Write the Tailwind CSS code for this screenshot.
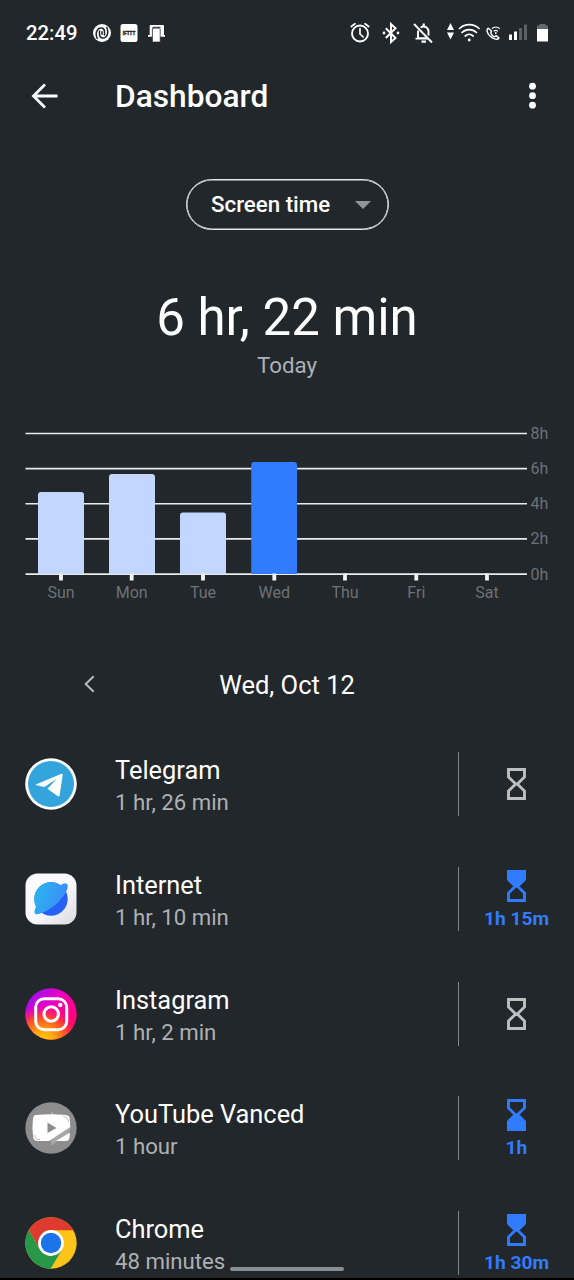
<!DOCTYPE html>
<html lang="en">
<head>
<meta charset="utf-8">
<title>Dashboard</title>
<script src="https://cdn.jsdelivr.net/npm/@tailwindcss/browser@4"></script>
</head>
<body class="bg-[#22272b] font-['Roboto',sans-serif] text-white">
<div class="relative h-[1280px] w-[574px] overflow-hidden">
  <svg class="hidden">
    <defs>
      <symbol id="hg-frame" viewBox="0 0 19 32"><path d="M1.5 1.5H17.5V9L10.300 16L17.5 23V30.5H1.5V23L8.700 16L1.5 9Z" fill="none" stroke="currentColor" stroke-width="2.9"/></symbol>
      <symbol id="hg-top" viewBox="0 0 19 32"><use href="#hg-frame"/><path d="M0 0H19V10L13 16H6L0 10Z" fill="currentColor"/></symbol>
      <symbol id="hg-bottom" viewBox="0 0 19 32"><use href="#hg-frame"/><path d="M0 32H19V22L13 16H6L0 22Z" fill="currentColor"/></symbol>
    </defs>
  </svg>

  <!-- Status bar -->
  <header class="flex h-16 items-center justify-between pl-[26px] pr-[26px] pt-px">
    <div class="flex items-center">
      <span class="w-[67px] pt-px text-[20.300px] font-medium leading-6">22:49</span>
      <svg class="h-[18px] w-[64px] text-white" viewBox="0 0 64 18" overflow="visible">
        <circle cx="9" cy="9" r="9" fill="#fff"/>
        <g fill="none" stroke="#22272b" stroke-width="1.500" stroke-linecap="round">
          <path d="M4.200 14.500C2.800 11 3 8 4.500 5.800C6.500 2.800 11.500 3.500 11.500 7.500V11"/>
          <path d="M13.800 3.500C15.200 7 15 10 13.500 12.200C11.500 15.200 6.500 14.500 6.500 10.500V7"/>
          <path d="M9 7.800V10.200"/>
        </g>
        <rect x="27.500" y="0" width="17" height="18" rx="2.500" fill="#fff"/>
        <text x="29.800" y="10.700" font-size="4.500" font-weight="900" fill="#22272b" stroke="#22272b" stroke-width=".3" textLength="12.500" lengthAdjust="spacingAndGlyphs">IFTTT</text>
        <path d="M56.700 2Q56.700 1 57.700 1H70Q71 1 71 2V11H72V12.700H55V11H56.700Z" fill="#fff"/>
        <path d="M60 12.700V3.300H67.500" fill="none" stroke="#22272b" stroke-width="1"/>
        <rect x="59.400" y="4.200" width="7.800" height="13.800" rx=".6" fill="#fff" stroke="#22272b" stroke-width=".7"/>
      </svg>
    </div>
    <svg class="h-6 w-[200px]" viewBox="348 20 200 24" fill="none" stroke="#fff">
      <g stroke-width="1.900" stroke-linecap="round">
        <circle cx="360" cy="32.500" r="8"/><path d="M360 27.500V33L363.200 36M351.300 25.500L355 22.800M368.700 25.500L365 22.800" stroke-width="1.700"/>
      </g>
      <path d="M385.800 27.200L395.500 37L391 41V23L395.500 27.200L385.800 37" stroke-width="2"/>
      <g fill="#fff" stroke="none"><circle cx="384" cy="32" r="1.400"/><circle cx="398" cy="32" r="1.400"/></g>
      <path d="M414 23L432 41.500" stroke-width="1.900"/>
      <path d="M418 29.500V37.300H428M420.600 26.500C424.500 24 428.500 26.800 428.500 30.500V34.500M415.500 37.600H428.500" stroke-width="1.900"/>
      <path d="M423.700 25V22.500M421.500 40.700H426" stroke-width="2.200"/>
      <path d="M447 29L450.500 22L454 29ZM447 31.500H454L450.500 38.500Z" fill="#fff" stroke="none"/>
      <g stroke-width="1.700" stroke-linecap="round"><path d="M459.500 27.500a14 14 0 0 1 19.500 0M462 31.500a10.500 10.500 0 0 1 14.500 0M465.200 35a6 6 0 0 1 8 0"/></g>
      <circle cx="469.200" cy="39" r="1.400" fill="#fff" stroke="none"/>
      <path d="M488.300 27.200C485.800 28.500 487.500 32.700 489.700 34.800C492 37.200 497 40 499 37L496.200 34.600L494.200 35.800C492.500 35 491.300 33.500 490.800 32L491.500 30Z" stroke-width="1.400" stroke-linejoin="round"/>
      <path d="M491.800 27.600a6 6 0 0 1 8 0M493.700 30.200a3.500 3.500 0 0 1 4.200 0" stroke-width="1.200"/><circle cx="495.800" cy="32" r=".9" fill="#fff" stroke="none"/>
      <g stroke="none"><path d="M509 33.500h3v5.500h-3zM514 30.500h3v8.500h-3z" fill="#fff"/><path d="M519 27h3v12h-3zM524 23.500h3v15.500h-3z" fill="#5d6164"/><path d="M537 28V24.500h2.500V23h6v1.500H548V28z" fill="#66696c"/><path d="M537 28h11v12.500H537z" fill="#fff"/></g>
    </svg>
  </header>

  <!-- Toolbar -->
  <div class="flex h-16 items-center pl-[31px] pr-[28px]">
    <svg class="h-[26px] w-[27px]" viewBox="0 0 27 26" fill="none" stroke="#fff" stroke-width="2.800"><path d="M14 1.500L2.500 13L14 24.500M2.500 13H26.500"/></svg>
    <h1 class="ml-[57px] flex-1 pt-[2px] text-[31.700px] font-medium leading-[38px]">Dashboard</h1>
    <svg class="h-[28px] w-[27px]" viewBox="0 0 27 28" fill="#fff"><circle cx="13.500" cy="4.200" r="3.400"/><circle cx="13.500" cy="13.700" r="3.400"/><circle cx="13.500" cy="23.200" r="3.400"/></svg>
  </div>

  <!-- Metric selector and total -->
  <button class="mx-auto mt-[50.500px] flex h-[51px] w-[203px] items-center justify-between rounded-full border border-[#e4e6e8] pl-[24.500px] pr-[17px] text-[22.300px] font-medium shadow-[inset_0_0_0_0.600px_#e4e6e8]">
    <span class="pt-[2px]">Screen time</span>
    <svg class="mt-0.5 h-2 w-4" viewBox="0 0 16 8" fill="#92969b"><path d="M0 0H16L8 8Z"/></svg>
  </button>
  <div class="mt-[58.500px] text-center text-[51px] leading-[60px]">6 hr, 22 min</div>
  <div class="mt-[4px] text-center text-[22.300px] leading-[26px] text-[#aeb0b3]">Today</div>

  <!-- Weekly chart -->
  <svg class="mt-[42px] block h-[190px] w-[574px]" viewBox="0 420 574 190" font-size="16" fill="#6d7174">
    <g stroke="#e9ebec" stroke-width="1.600"><path d="M25.500 433.500H527M25.500 468.600H527M25.500 503.700H527M25.500 538.900H527M25.500 574.100H527"/></g>
    <g fill="#c2d6ff">
      <path d="M38 574V495q0-3 3-3H81q3 0 3 3V574Z"/>
      <path d="M109 574V477q0-3 3-3H152q3 0 3 3V574Z"/>
      <path d="M180 574V515.500q0-3 3-3H223q3 0 3 3V574Z"/>
      <path d="M251.200 574V465q0-3 3-3H294q3 0 3 3V574Z" fill="#317bff"/>
    </g>
    <path d="M61 573.500V580.500M131.700 573.500V580.500M203 573.500V580.500M274.300 573.500V580.500M345 573.500V580.500M416.300 573.500V580.500M487 573.500V580.500" stroke="#f1f3f4" stroke-width="3.800"/>
    <g text-anchor="middle">
      <text x="61" y="598">Sun</text><text x="131.700" y="598">Mon</text><text x="203" y="598">Tue</text><text x="274.300" y="598">Wed</text><text x="345" y="598">Thu</text><text x="416.300" y="598">Fri</text><text x="487" y="598">Sat</text>
    </g>
    <text x="530.500" y="439">8h</text><text x="530.500" y="474.200">6h</text><text x="530.500" y="509.300">4h</text><text x="530.500" y="544.400">2h</text><text x="530.500" y="579.500">0h</text>
  </svg>

  <!-- Day picker -->
  <div class="mt-[45px] grid h-[60px] grid-cols-[115px_1fr_115px] items-center">
    <svg class="-mt-0.5 ml-[84px] h-[18px] w-[11px]" viewBox="0 0 11 18" fill="none" stroke="#b9bbbd" stroke-width="2"><path d="M9.700 1.200L1.700 9L9.700 16.800"/></svg>
    <div class="text-center text-[25.500px] leading-[30px]">Wed, Oct 12</div>
  </div>

  <!-- App list -->
  <ul class="mt-[11.500px]">
    <li class="flex h-[114.850px] items-center pl-[25px]">
      <svg class="h-[52px] w-[52px]" viewBox="0 0 52 52"><circle cx="26" cy="26" r="25.800" fill="#fff"/><circle cx="26" cy="26" r="23" fill="#33a4dc"/><path d="M11.300 26.300L36.500 15.800Q38 15.200 37.700 17L34.600 37.500Q34.200 39.200 32.800 38.200L22.500 30.800L31.500 21L19.300 29.100L11.500 27.200Q10.500 26.800 11.300 26.300Z" fill="#fff"/></svg>
      <div class="ml-[38px] flex-1 pt-1"><div class="text-[25.400px] leading-[32px]">Telegram</div><div class="text-[22.200px] leading-[32px] text-[#aeb0b3]">1 hr, 26 min</div></div>
      <div class="flex h-16 w-[116px] flex-col items-center justify-center border-l-[1.500px] border-[#85888b] text-[#bdbfc1]"><svg class="h-8 w-[19px]"><use href="#hg-frame"/></svg></div>
    </li>
    <li class="flex h-[114.850px] items-center pl-[25px]">
      <svg class="h-[52px] w-[52px]" viewBox="0 0 52 52">
        <defs><linearGradient id="ig" x1="0" y1="0" x2="1" y2="1"><stop offset=".5" stop-color="#fbfbfd"/><stop offset="1" stop-color="#d9d9df"/></linearGradient><linearGradient id="ip" x1="0" y1="0" x2="1" y2=".3"><stop offset="0" stop-color="#29b7ef"/><stop offset="1" stop-color="#3c8df8"/></linearGradient></defs>
        <rect x=".5" y=".5" width="51" height="51" rx="12" fill="url(#ig)"/>
        <circle cx="26" cy="26" r="16.700" fill="#2860f5"/>
        <path d="M9.300 26A16.700 16.700 0 0 1 35.500 12.200C38 10.600 40.500 9.500 42 11C43.500 13 42.500 16.500 40.700 19.500C36 28 26 37 16 40.300C13.500 41.500 10.800 41.800 9.800 40.500C8.800 39 9.800 36.500 11 34Q9.300 30.500 9.300 26Z" fill="url(#ip)"/>
      </svg>
      <div class="ml-[38px] flex-1 pt-1"><div class="text-[25.400px] leading-[32px]">Internet</div><div class="text-[22.200px] leading-[32px] text-[#aeb0b3]">1 hr, 10 min</div></div>
      <div class="flex h-16 w-[116px] flex-col items-center justify-between border-l-[1.500px] border-[#85888b] pt-[3px] text-[#317bff]"><svg class="h-8 w-[19px]"><use href="#hg-top"/></svg><span class="text-[19.200px] font-bold leading-[24px]">1h 15m</span></div>
    </li>
    <li class="flex h-[114.850px] items-center pl-[25px]">
      <svg class="h-[52px] w-[52px]" viewBox="0 0 52 52">
        <defs><linearGradient id="ga" x1=".15" y1=".05" x2=".95" y2=".8"><stop offset="0" stop-color="#9a10f5"/><stop offset=".35" stop-color="#e800c8"/><stop offset=".7" stop-color="#ff0090"/><stop offset="1" stop-color="#ff0a5c"/></linearGradient><radialGradient id="gb" cx=".35" cy="1.050" r=".75"><stop offset="0" stop-color="#ffd60a"/><stop offset=".3" stop-color="#ffa80c"/><stop offset=".65" stop-color="#ff4a28"/><stop offset="1" stop-color="#ff0080" stop-opacity="0"/></radialGradient></defs>
        <circle cx="26" cy="26" r="25.700" fill="url(#ga)"/><circle cx="26" cy="26" r="25.700" fill="url(#gb)"/>
        <g fill="none" stroke="#fff" stroke-width="3"><rect x="10.700" y="10.700" width="31" height="31" rx="8.500"/><circle cx="26.200" cy="26" r="7.200"/></g><circle cx="35.300" cy="17" r="2.200" fill="#fff"/>
      </svg>
      <div class="ml-[38px] flex-1 pt-1"><div class="text-[25.400px] leading-[32px]">Instagram</div><div class="text-[22.200px] leading-[32px] text-[#aeb0b3]">1 hr, 2 min</div></div>
      <div class="flex h-16 w-[116px] flex-col items-center justify-center border-l-[1.500px] border-[#85888b] text-[#bdbfc1]"><svg class="h-8 w-[19px]"><use href="#hg-frame"/></svg></div>
    </li>
    <li class="flex h-[114.850px] items-center pl-[25px]">
      <svg class="h-[52px] w-[52px]" viewBox="0 0 52 52">
        <circle cx="26" cy="26" r="25.700" fill="#8d8d8d"/>
        <path d="M26 9L46 25L43 32L26 43.500Z" fill="#a8a8a8"/>
        <path d="M11 13Q26 11.500 41 13Q44.500 13.500 44.800 17L45.200 25L24 39H12.500Q8.500 39 8.200 35Q6.800 26 8 16.500Q8.400 13.200 11 13Z" fill="#fff"/>
        <path d="M45 30.500L44.500 35.500Q44 38.800 41 39H31Z" fill="#fff"/>
        <path d="M38.500 14.500Q43.500 15 43.500 20M9.500 33Q10 38 15 37.500" fill="none" stroke="#aaa" stroke-width=".8"/>
        <path d="M22.500 20.500L31.500 26L22.500 31Z" fill="#8d8d8d"/>
      </svg>
      <div class="ml-[38px] flex-1 pt-1"><div class="text-[25.400px] leading-[32px]">YouTube Vanced</div><div class="text-[22.200px] leading-[32px] text-[#aeb0b3]">1 hour</div></div>
      <div class="flex h-16 w-[116px] flex-col items-center justify-between border-l-[1.500px] border-[#85888b] pt-[3px] text-[#317bff]"><svg class="h-8 w-[19px]"><use href="#hg-bottom"/></svg><span class="text-[19.200px] font-bold leading-[24px]">1h</span></div>
    </li>
    <li class="flex h-[114.850px] items-center pl-[25px]">
      <svg class="h-[52px] w-[52px]" viewBox="0 0 52 52">
        <defs><clipPath id="cc"><circle cx="26" cy="26" r="25.700"/></clipPath></defs>
        <g clip-path="url(#cc)"><rect width="52" height="52" fill="#fcc419"/><path d="M0 0H52V13.200H26L14.900 32.400L3.700 13Z" fill="#df3a2f"/><path d="M3.700 13L14.900 32.400Q19 38.800 26 38.800L37.100 32.400L25.500 52H0V13Z" fill="#279847"/></g>
        <circle cx="26" cy="26" r="12.900" fill="#fff"/><circle cx="26" cy="26" r="10.200" fill="#1a73e8"/>
      </svg>
      <div class="ml-[38px] flex-1 pt-1"><div class="text-[25.400px] leading-[32px]">Chrome</div><div class="text-[22.200px] leading-[32px] text-[#aeb0b3]">48 minutes</div></div>
      <div class="flex h-16 w-[116px] flex-col items-center justify-between border-l-[1.500px] border-[#85888b] pt-[3px] text-[#317bff]"><svg class="h-8 w-[19px]"><use href="#hg-top"/></svg><span class="text-[19.200px] font-bold leading-[24px]">1h 30m</span></div>
    </li>
  </ul>

  <!-- Gesture handle and screen edge -->
  <div class="absolute left-[230px] top-[1267px] h-[3.500px] w-[114px] rounded-full bg-[#8b8e91]"></div>
  <div class="absolute inset-x-0 bottom-0 h-[2px] bg-black"></div>
</div>
</body>
</html>
